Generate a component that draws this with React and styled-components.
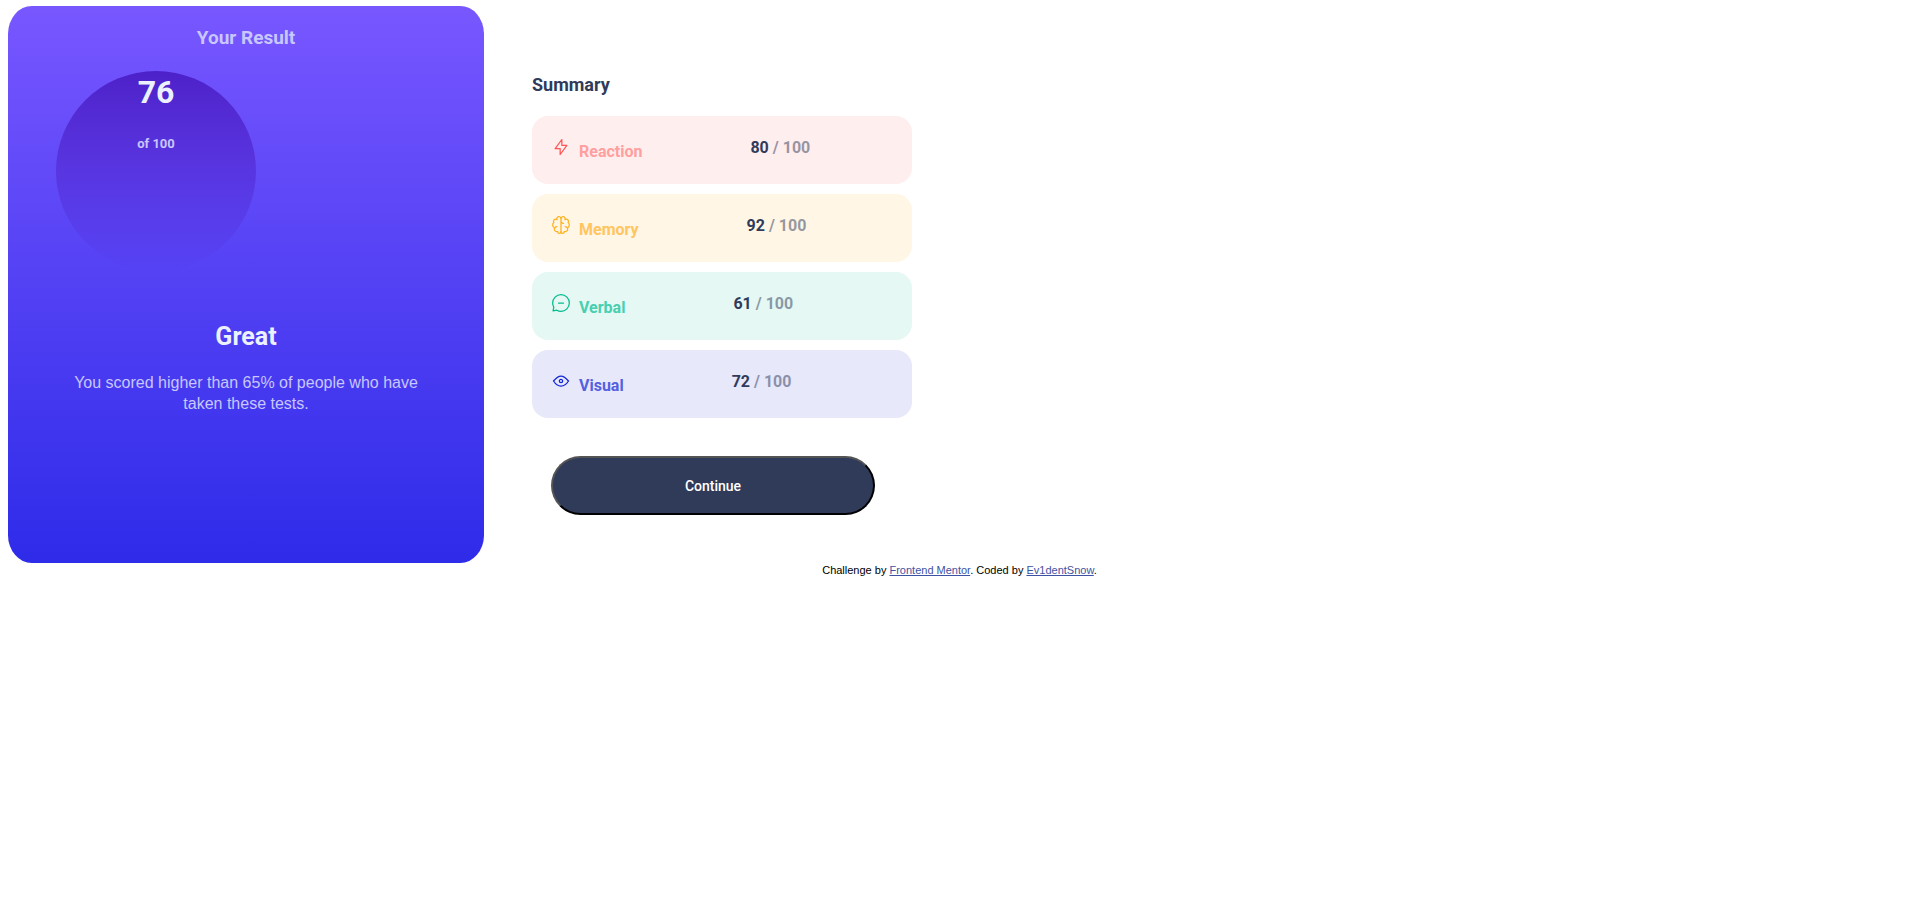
import React from "react";
import styled, { createGlobalStyle } from "styled-components";

const GlobalStyle = createGlobalStyle`
  *, *::before, *::after {
    box-sizing: border-box;
  }

  body {
    margin: 6px 8px;
    background: #fff;
    color: #303b5a;
    font-family: Roboto, "Liberation Sans", sans-serif;
    font-size: 16px;
  }

  h1, h2, p, ul {
    margin: 0;
    padding: 0;
  }
`;

const Layout = styled.main`
  display: flex;
  flex-wrap: wrap;
  align-items: flex-start;
  gap: 48px;
`;

const ResultCard = styled.section`
  width: 100%;
  max-width: 476px;
  padding: 20px 48px 149px;
  border-radius: 5%;
  background: linear-gradient(#7857ff, #2e2be9);
  color: #c8c7ff;
  text-align: center;
`;

const ResultTitle = styled.h1`
  font-size: 19px;
  line-height: 24px;
  font-weight: 700;
`;

const ScoreCircle = styled.div`
  width: 200px;
  height: 200px;
  margin-top: 21px;
  padding-top: 3px;
  border-radius: 50%;
  background: linear-gradient(#4d21c9, rgba(37, 33, 201, 0));
`;

const Score = styled.p`
  color: #ebf1ff;
  font-size: 32px;
  line-height: 36px;
  font-weight: 700;
`;

const ScoreTotal = styled.p`
  margin-top: 26px;
  font-size: 13px;
  line-height: 16px;
  font-weight: 700;
`;

const Verdict = styled.h2`
  margin-top: 51px;
  color: #ebf1ff;
  font-size: 25px;
  line-height: 30px;
  font-weight: 700;
`;

const Description = styled.p`
  margin-top: 20px;
  font-family: "Liberation Sans", sans-serif;
  font-size: 16px;
  line-height: 21px;
`;

const Summary = styled.section`
  width: 100%;
  max-width: 380px;
  padding-top: 67px;
`;

const SummaryTitle = styled.h2`
  font-size: 18px;
  line-height: 24px;
  font-weight: 700;
`;

const CategoryList = styled.ul`
  display: flex;
  flex-direction: column;
  gap: 10px;
  margin-top: 19px;
  list-style: none;
`;

const Category = styled.li`
  display: flex;
  align-items: flex-start;
  padding: 21px 19px 22px;
  border-radius: 16px;
  background: ${(p) => p.$background};
`;

const CategoryIcon = styled.svg`
  flex: none;
  width: 20px;
  height: 20px;
  fill: none;
  stroke: ${(p) => p.$color};
  stroke-width: 1.25;
  stroke-linecap: round;
  stroke-linejoin: round;
`;

const CategoryName = styled.span`
  margin-left: 8px;
  padding-top: 5px;
  color: ${(p) => p.$color};
  font-size: 16px;
  line-height: 20px;
  font-weight: 700;
`;

const CategoryScore = styled.span`
  margin-left: 108px;
  padding-top: 1px;
  font-size: 16px;
  line-height: 20px;
  font-weight: 700;
`;

const OutOf = styled.span`
  opacity: 0.5;
`;

const ContinueButton = styled.button`
  display: block;
  width: calc(100% - 56px);
  height: 59px;
  margin: 38px 0 0 19px;
  border: 2px outset #000;
  border-radius: 30px;
  background: #303b5a;
  color: #fff;
  font-family: inherit;
  font-size: 14px;
  font-weight: 500;
`;

const Footer = styled.footer`
  padding-left: 6px;
  color: #000;
  font-family: "Liberation Sans", sans-serif;
  font-size: 11px;
  line-height: 14px;
  text-align: center;
`;

const FooterLink = styled.a`
  color: #3e52a3;
`;

const categories = [
  {
    name: "Reaction",
    score: 80,
    color: "#ff5555",
    textColor: "#ff9f9f",
    background: "#ffeeee",
    paths: ["M10.833 8.333V2.5l-6.666 9.167h5V17.5l6.666-9.167h-5Z"],
  },
  {
    name: "Memory",
    score: 92,
    color: "#ffb21e",
    textColor: "#ffc55f",
    background: "#fff6e6",
    paths: [
      "M5.833 11.667a2.5 2.5 0 1 0 .834 4.858",
      "M3.553 13.004a3.333 3.333 0 0 1-.728-5.53m.025-.067a2.083 2.083 0 0 1 2.983-2.824m.199.054A2.083 2.083 0 1 1 10 3.75v12.917a1.667 1.667 0 0 1-3.333 0M10 5.833a2.5 2.5 0 0 0 2.5 2.5m1.667 3.334a2.5 2.5 0 1 1-.834 4.858",
      "M16.447 13.004a3.334 3.334 0 0 0 .728-5.53m-.025-.067a2.083 2.083 0 0 0-2.983-2.824M10 3.75a2.085 2.085 0 0 1 2.538-2.033 2.084 2.084 0 0 1 1.43 2.92m-.635 12.03a1.667 1.667 0 0 1-3.333 0",
    ],
  },
  {
    name: "Verbal",
    score: 61,
    color: "#00bb8f",
    textColor: "#48cfb0",
    background: "#e5f8f3",
    paths: [
      "M7.5 10h5M10 18.333A8.333 8.333 0 1 0 1.667 10c0 1.518.406 2.942 1.115 4.167l-.699 3.75 3.75-.699A8.295 8.295 0 0 0 10 18.333Z",
    ],
  },
  {
    name: "Visual",
    score: 72,
    color: "#1125d6",
    textColor: "#5360e0",
    background: "#e7e8fa",
    paths: [
      "M10 11.667a1.667 1.667 0 1 0 0-3.334 1.667 1.667 0 0 0 0 3.334Z",
      "M17.5 10c-1.574 2.492-4.402 5-7.5 5s-5.926-2.508-7.5-5C4.416 7.632 6.66 5 10 5s5.584 2.632 7.5 5Z",
    ],
  },
];

export default function App() {
  return (
    <>
      <GlobalStyle />
      <Layout>
        <ResultCard>
          <ResultTitle>Your Result</ResultTitle>
          <ScoreCircle>
            <Score>76</Score>
            <ScoreTotal>of 100</ScoreTotal>
          </ScoreCircle>
          <Verdict>Great</Verdict>
          <Description>
            You scored higher than 65% of people who have taken these tests.
          </Description>
        </ResultCard>
        <Summary>
          <SummaryTitle>Summary</SummaryTitle>
          <CategoryList>
            {categories.map((c) => (
              <Category key={c.name} $background={c.background}>
                <CategoryIcon viewBox="0 0 20 20" aria-hidden="true" $color={c.color}>
                  {c.paths.map((d) => (
                    <path key={d} d={d} />
                  ))}
                </CategoryIcon>
                <CategoryName $color={c.textColor}>{c.name}</CategoryName>
                <CategoryScore>
                  {c.score} <OutOf>/ 100</OutOf>
                </CategoryScore>
              </Category>
            ))}
          </CategoryList>
          <ContinueButton type="button">Continue</ContinueButton>
        </Summary>
      </Layout>
      <Footer>
        Challenge by <FooterLink href="#frontend-mentor">Frontend Mentor</FooterLink>. Coded by{" "}
        <FooterLink href="#author">Ev1dentSnow</FooterLink>.
      </Footer>
    </>
  );
}
